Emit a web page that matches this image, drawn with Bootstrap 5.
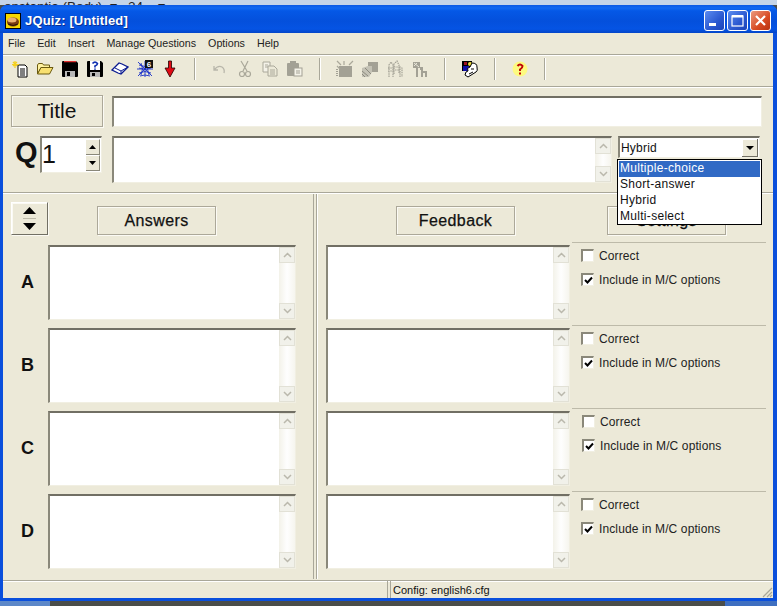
<!DOCTYPE html>
<html lang="en">
<head>
<meta charset="utf-8">
<title>JQuiz</title>
<link href="https://cdn.jsdelivr.net/npm/bootstrap@5.3.0/dist/css/bootstrap.min.css" rel="stylesheet">
<style>
html,body{margin:0;width:777px;height:606px;overflow:hidden;background:#4a4c48;}
body{font-family:"Liberation Sans",Arial,sans-serif;font-size:11.5px;color:#111;line-height:1.2;}
.scene{width:777px;height:606px;}
.deskstrip{height:5px;background:#c4d4e8;overflow:hidden;color:#222;font-size:13.5px;white-space:nowrap;line-height:14px;}
.deskstrip span{display:inline-block;margin-top:-10px;padding-left:4px;}
.xpwin{height:596px;background:#0a4fdc;border-radius:7px 7px 0 0;}
.xptitle{height:28px;flex:none;padding:2px 6px 0 5px;background:linear-gradient(#0a58e4 0,#0f68f2 3px,#0558e6 6px,#0450dc 16px,#0554e4 24px,#0346c8 28px);color:#fff;font-weight:700;font-size:13px;border-radius:7px 7px 0 0;}
.xptitle .apptext{text-shadow:1px 1px 0 #0a2f90;letter-spacing:.15px;margin-top:2px;}
.xptitle .appicon{margin-top:1px;}
.winbtn{width:21px;height:21px;border:1px solid #fff;border-radius:3px;background:linear-gradient(135deg,#5c8cf0,#2a58d0 60%,#1c44b8);}
.winbtn.closebtn{background:linear-gradient(135deg,#ea9a80,#d84a22 60%,#b83210);}
.winbody{margin:0 4px 0 3px;background:#ece9d8;min-height:0;}
.menurow{height:21px;flex:none;padding-left:5px;gap:12px;font-size:10.7px;color:#222;}
.toolrow{height:33px;flex:none;padding:0 0 3px 4px;border-top:1px solid #a9a799;border-bottom:1px solid #a9a799;box-shadow:inset 0 1px 0 #fff,0 1px 0 #fff;}
.toolslot{width:25px;height:24px;flex:none;}
.toolsep{width:25px;height:24px;flex:none;}
.toolsep i{display:block;width:1px;height:22px;background:#a9a799;box-shadow:1px 0 0 #fff;}
.toppanel{height:106px;flex:none;padding:8px 10px 0 8px;position:relative;border-bottom:1px solid #a9a799;box-shadow:0 1px 0 #fff;}
.flatbtn{border:1px solid #aca899;box-shadow:inset 1px 1px 0 #fbfaf4,1px 1px 0 #fbfaf4;background:#ece9d8;font-size:16px;letter-spacing:.4px;-webkit-text-stroke:.25px #111;display:flex;align-items:center;justify-content:center;flex:none;color:#111;}
.titlebtn{width:92px;height:32px;font-size:21px;letter-spacing:0;-webkit-text-stroke:0;}
.sunken{background:#fff;border-top:2px solid #716f64;border-left:2px solid #8a887a;border-right:1px solid #f1efe2;border-bottom:1px solid #f1efe2;}
.titlefield{width:650px;height:31px;margin:1px 0 0 9px;}
.qrow{margin-top:9px;}
.qmark{width:29px;font-size:29px;font-weight:700;line-height:31px;padding-left:4px;margin-top:1px;flex:none;}
.spinbox{width:62px;height:37px;margin-left:0;font-size:25px;line-height:32px;padding-left:0;flex:none;}
.spinarrows{width:14px;margin:1px 1px 0 0;}
.spinarrows b{height:16px;display:flex;align-items:center;justify-content:center;background:#ece9d8;border-bottom:1px solid #8a887a;border-right:1px solid #8a887a;border-top:1px solid #fff;}
.qfield{width:500px;height:47px;margin-left:10px;}
.combo{width:142px;height:22px;margin:0 0 0 6px;font-size:12px;line-height:20px;padding-left:1px;letter-spacing:.2px;align-self:flex-start;}
.combobtn{width:16px;height:18px;background:#ece9d8;border-right:1px solid #716f64;border-bottom:1px solid #716f64;box-shadow:inset 1px 1px 0 #fff;margin-right:1px;margin-top:1px;}
.droplist{position:absolute;left:614px;top:72px;width:145px;height:66px;background:#fff;border:1px solid #000;z-index:5;padding:1px;font-size:12px;letter-spacing:.3px;}
.droplist div{height:16px;line-height:15px;padding-left:1px;}
.droplist .picked{background:#316ac5;color:#fff;}
.scrolltrack{width:16px;flex:none;background:linear-gradient(90deg,#f3f2e9,#fefefe 50%,#f6f5ee);}
.scrollcap{height:16px;background:#f1f1ea;border:1px solid #e2e1d6;display:flex;align-items:center;justify-content:center;}
.mainzone{flex:1 1 auto;min-height:0;}
.leftcol{width:311px;flex:none;padding:9px 0 0 8px;border-right:1px solid #a9a799;}
.rightcol{margin-left:2px;border-left:1px solid #a9a799;box-shadow:inset 1px 0 0 #fff;padding:13px 0 0 9px;flex:1 1 auto;min-width:0;}
.headrow{height:43px;flex:none;}
.headrow.righthead{height:39px;}
.movebtn{width:37px;height:33px;border:1px solid;border-color:#fff #716f64 #716f64 #fff;}
.movebtn b{height:16px;display:flex;align-items:center;justify-content:center;}
.movebtn b+b{border-top:1px solid #bdbaa9;}
.answersbtn{width:119px;height:29px;margin:4px 0 0 49px;}
.feedbackbtn{width:119px;height:29px;margin-left:70px;}
.settingsbtn{width:119px;height:29px;margin-left:92px;}
.letterbox{width:37px;padding-right:4px;font-size:18px;font-weight:700;flex:none;}
.rowstack{gap:8px;}
.ansfield{width:248px;height:75px;}
.fbfield{width:244px;height:75px;}
.optcol{width:194px;height:78px;margin:-3px 0 0 2px;border-top:1px solid #bdbaa9;padding:6px 0 0 9px;font-size:12px;letter-spacing:.12px;color:#222;}
.optcol.nudged{padding-left:10px;}
.optline{height:24px;}
.xpcheck{width:13px;height:13px;flex:none;margin-right:5px;background:#fff;border-top:2px solid #8a887a;border-left:2px solid #8a887a;border-right:1px solid #f1efe2;border-bottom:1px solid #f1efe2;display:flex;align-items:center;justify-content:center;}
.statusrow{height:18px;flex:none;margin-top:1px;border-top:1px solid #a9a799;box-shadow:inset 0 1px 0 #fff;}
.statleft{width:385px;flex:none;border-right:1px solid #a9a799;}
.statright{flex:1 1 auto;padding:3px 0 0 2px;font-size:11px;border-left:1px solid #a9a799;margin-left:2px;}
.bluefoot{height:3px;flex:none;}
.deskfoot{height:5px;background:linear-gradient(90deg,#5d88c8 0,#5d88c8 50px,#4b4d49 50px,#4b4d49 725px,#3f6fc0 725px);}
</style>
</head>
<body>
<div class="scene d-flex flex-column">
 <div class="deskstrip"><span>onstantia (Body)&nbsp;&nbsp;▾&nbsp;&nbsp;&nbsp;24&nbsp;&nbsp;&nbsp;&nbsp;▾</span></div>
 <div class="xpwin d-flex flex-column">
  <div class="xptitle d-flex align-items-center">
   <svg width="16" height="16" viewBox="0 0 16 16" class="appicon me-1 flex-none"><rect width="16" height="16" fill="#f4d800"/><rect x=".5" y=".5" width="15" height="15" fill="none" stroke="#000"/><ellipse cx="8" cy="9" rx="6" ry="4.5" fill="#7a3c10"/><ellipse cx="7" cy="7" rx="4.5" ry="2.5" fill="#e8b070"/><path d="M3 11q5 3 10 0" stroke="#2a1404" fill="none"/></svg>
   <span class="apptext">JQuiz: [Untitled]</span>
   <div class="ms-auto d-flex gap-0">
    <div class="winbtn d-flex align-items-end" style="margin-right:2px"><svg width="19" height="19" viewBox="0 0 19 19"><rect x="4" y="12" width="7" height="3" fill="#fff"/></svg></div>
    <div class="winbtn" style="margin-right:2px"><svg width="19" height="19" viewBox="0 0 19 19"><rect x="4" y="5" width="11" height="10" fill="none" stroke="#fff" stroke-width="1.2"/><rect x="4" y="4" width="11" height="2.5" fill="#fff"/></svg></div>
    <div class="winbtn closebtn"><svg width="19" height="19" viewBox="0 0 19 19"><path d="M5 5l9 9M14 5l-9 9" stroke="#fff" stroke-width="2.2"/></svg></div>
   </div>
  </div>
  <div class="winbody flex-grow-1 d-flex flex-column">
   <div class="menurow d-flex align-items-center"><span>File</span><span>Edit</span><span>Insert</span><span>Manage Questions</span><span>Options</span><span>Help</span></div>
   <div class="toolrow d-flex align-items-center">
    <div class="toolslot d-flex align-items-center justify-content-center"><svg width="18" height="18" viewBox="0 0 18 18"><path d="M7 5h7l2 2v10H7z" fill="#fff" stroke="#000"/><path d="M9 9h5M9 11h5M9 13h5M9 15h5" stroke="#000"/><path d="M4 1v7M1 4.500h7M2 2l4 4M6 2L2 6" stroke="#f4d020" stroke-width="1.2"/></svg></div>
    <div class="toolslot d-flex align-items-center justify-content-center"><svg width="18" height="18" viewBox="0 0 18 18"><path d="M1.500 5l1-1.500h4l1 1.500h6v2.500H5L1.500 14z" fill="#fff2a0" stroke="#6a5a10"/><path d="M1.500 14L5 7.500h12L13.500 14z" fill="#f8e070" stroke="#6a5a10"/></svg></div>
    <div class="toolslot d-flex align-items-center justify-content-center"><svg width="18" height="18" viewBox="0 0 18 18"><path d="M2 1h13l2 2v13a1 1 0 0 1-1 1H2a1 1 0 0 1-1-1V2a1 1 0 0 1 1-1z" fill="#000"/><rect x="3" y="1" width="12" height="1.500" fill="#e03030"/><rect x="3" y="2.500" width="12" height="6" fill="#000"/><rect x="4" y="11" width="10" height="6" fill="#b8b8b8"/><rect x="6" y="12" width="3" height="4" fill="#000"/></svg></div>
    <div class="toolslot d-flex align-items-center justify-content-center"><svg width="18" height="18" viewBox="0 0 18 18"><path d="M2 1h13l2 2v13a1 1 0 0 1-1 1H2a1 1 0 0 1-1-1V2a1 1 0 0 1 1-1z" fill="#000"/><rect x="4" y="1" width="10" height="9" fill="#fff"/><rect x="4" y="12" width="10" height="5" fill="#b8b8b8"/><rect x="6" y="13" width="3" height="3" fill="#000"/><path d="M6.500 3.500Q9 .8 11.500 3.500 11.500 5 9 6V7.500M9 8.500v1.200" fill="none" stroke="#1030b0" stroke-width="1.700"/></svg></div>
    <div class="toolslot d-flex align-items-center justify-content-center"><svg width="18" height="18" viewBox="0 0 18 18"><path d="M1 10l7-7 3 1 6 3-7 7-3-1z" fill="#fff" stroke="#0a1a90" stroke-width="1.300"/><path d="M4 8l6 3M10 14l0-3 7-4" fill="none" stroke="#0a1a90"/></svg></div>
    <div class="toolslot d-flex align-items-center justify-content-center"><svg width="18" height="18" viewBox="0 0 18 18"><path d="M2 2l14 14M16 2L2 16M9 1v16M1 9h16M3 5q6 3 12 0M3 8q6 3 12 0M3 13q6-3 12 0M4 16q5-2 10 0M5 3q3 6 0 12M13 3q-3 6 0 12" stroke="#1a30c8" fill="none" stroke-width=".9"/><rect x="9" y="0" width="8" height="8" fill="#111"/><text x="13" y="7" text-anchor="middle" font-family="Liberation Sans" font-weight="700" font-size="8" fill="#fff">6</text></svg></div>
    <div class="toolslot d-flex align-items-center justify-content-center"><svg width="12" height="18" viewBox="0 0 12 18"><path d="M4.500 1h3v7H11l-5 9-5-9h3.500z" fill="#e00a14" stroke="#200" stroke-width=".8"/></svg></div>
    <div class="toolsep d-flex align-items-center justify-content-center"><i></i></div>
    <div class="toolslot d-flex align-items-center justify-content-center"><svg width="16" height="12" viewBox="0 0 16 12"><path d="M2 3v4h4M2 7q4-5 8-3 3 2 2 6" fill="none" stroke="#b8b6aa" stroke-width="1.300"/></svg></div>
    <div class="toolslot d-flex align-items-center justify-content-center"><svg width="14" height="18" viewBox="0 0 14 18"><path d="M3 1l6 10M10 1L5 11" stroke="#aaa89a" stroke-width="1.200"/><circle cx="4" cy="14" r="2.500" fill="none" stroke="#aaa89a" stroke-width="1.200"/><circle cx="10" cy="14" r="2.500" fill="none" stroke="#aaa89a" stroke-width="1.200"/></svg></div>
    <div class="toolslot d-flex align-items-center justify-content-center"><svg width="16" height="16" viewBox="0 0 16 16"><path d="M1 1h7l0 10H1z" fill="#f4f2e8" stroke="#aaa89a"/><path d="M6 5h6l3 3v7H6z" fill="#ece9d8" stroke="#aaa89a"/><path d="M8 9h5M8 11h5M8 13h5M3 4h3M3 6h3" stroke="#aaa89a"/></svg></div>
    <div class="toolslot d-flex align-items-center justify-content-center"><svg width="17" height="16" viewBox="0 0 17 16"><rect x="1" y="2" width="12" height="13" fill="#a3a195" rx="1"/><rect x="4" y="0" width="6" height="3" fill="#a3a195"/><rect x="8" y="7" width="8" height="8" fill="#f4f2e8" stroke="#a3a195"/><path d="M10 10h4M10 12h4" stroke="#a3a195"/></svg></div>
    <div class="toolsep d-flex align-items-center justify-content-center"><i></i></div>
    <div class="toolslot d-flex align-items-center justify-content-center"><svg width="18" height="18" viewBox="0 0 18 18"><path d="M3 6h13v11H3z" fill="#a3a195"/><path d="M1 1l4 4M17 1l-4 4M8 1v4M1 6l3 3" stroke="#aaa89a" stroke-width="1.200"/><path d="M1 9v7" stroke="#a3a195" stroke-dasharray="1 1" stroke-width="2"/></svg></div>
    <div class="toolslot d-flex align-items-center justify-content-center"><svg width="18" height="18" viewBox="0 0 18 18"><path d="M7 2h10v10H7z" fill="#a3a195"/><path d="M1 8l6-2h4v6l-3 5H1z" fill="#c4c2b5"/><path d="M1 11l6 5M1 14l3 3M4 8l6 6" stroke="#8c8a7e"/></svg></div>
    <div class="toolslot d-flex align-items-center justify-content-center"><svg width="18" height="18" viewBox="0 0 18 18"><path d="M3 17V5l2-3 2 3v12M8 14V4l3-3 2 4v9M14 17V7l2 1v9M2 8h6M2 11h6M8 7h5M9 10h5" fill="none" stroke="#a3a195" stroke-width="1.200" stroke-dasharray="1.500 .8"/></svg></div>
    <div class="toolslot d-flex align-items-center justify-content-center"><svg width="18" height="18" viewBox="0 0 18 18"><path d="M2 2h7v6H7v9H5V8H2z" fill="#a3a195"/><path d="M9 7h3v4h4v6h-2v-4h-2v4h-2V10H9z" fill="#a3a195"/><path d="M3 3l5 4M3 6l3-3" stroke="#e8e6d8"/></svg></div>
    <div class="toolsep d-flex align-items-center justify-content-center"><i></i></div>
    <div class="toolslot d-flex align-items-center justify-content-center"><svg width="18" height="18" viewBox="0 0 18 18"><rect x="1" y="1" width="10" height="10" fill="#000"/><rect x="2" y="6" width="6" height="5" fill="#1010a8"/><rect x="3" y="2" width="3" height="3" fill="#a01020"/><circle cx="9" cy="4" r="2" fill="#f0e040"/><path d="M11 3q5 0 5 4 1 4-1 5l-8 5-3-2 1-3 2-1q-2-3 2-4z" fill="#fff" stroke="#000"/><path d="M8 14l4-2M10 9h3" stroke="#000"/></svg></div>
    <div class="toolsep d-flex align-items-center justify-content-center"><i></i></div>
    <div class="toolslot d-flex align-items-center justify-content-center"><svg width="16" height="16" viewBox="0 0 16 16"><circle cx="8" cy="8" r="7.500" fill="#fdfa80"/><path d="M5.500 5Q8 2 10.500 5 10.500 7 8 8.500V10" fill="none" stroke="#c00808" stroke-width="2"/><rect x="7" y="11.500" width="2" height="2" fill="#c00808"/></svg></div>
    <div class="toolsep d-flex align-items-center justify-content-center"><i></i></div>
   </div>
   <div class="toppanel">
    <div class="d-flex">
     <div class="flatbtn titlebtn">Title</div>
     <div class="sunken titlefield"></div>
    </div>
    <div class="d-flex qrow">
     <div class="qmark">Q</div>
     <div class="sunken spinbox d-flex justify-content-between">
      <span>1</span>
      <div class="spinarrows"><b><svg width="7" height="4" viewBox="0 0 7 4"><path d="M3.500 0L7 4H0z" fill="#000"/></svg></b><b><svg width="7" height="4" viewBox="0 0 7 4"><path d="M0 0h7L3.500 4z" fill="#000"/></svg></b></div>
     </div>
     <div class="sunken qfield d-flex justify-content-end">
      <div class="scrolltrack d-flex flex-column justify-content-between"><div class="scrollcap"><svg width="9" height="6" viewBox="0 0 9 6"><path d="M1 5l3.500-3.500L8 5" fill="none" stroke="#bab8ac" stroke-width="1.500"/></svg></div><div class="scrollcap"><svg width="9" height="6" viewBox="0 0 9 6"><path d="M1 1l3.500 3.500L8 1" fill="none" stroke="#bab8ac" stroke-width="1.500"/></svg></div></div>
     </div>
     <div class="sunken combo d-flex justify-content-between"><span>Hybrid</span><div class="combobtn d-flex align-items-center justify-content-center"><svg width="8" height="4" viewBox="0 0 8 4"><path d="M0 0h8L4 4z" fill="#000"/></svg></div></div>
    </div>
    <div class="droplist"><div class="picked">Multiple-choice</div><div>Short-answer</div><div>Hybrid</div><div>Multi-select</div></div>
   </div>
   <div class="mainzone d-flex">
    <div class="leftcol d-flex flex-column">
     <div class="headrow d-flex">
      <div class="flatbtn movebtn flex-column">
       <b><svg width="13" height="7" viewBox="0 0 13 7"><path d="M6.500 0L13 7H0z" fill="#000"/></svg></b>
       <b><svg width="13" height="7" viewBox="0 0 13 7"><path d="M0 0h13L6.500 7z" fill="#000"/></svg></b>
      </div>
      <div class="flatbtn answersbtn">Answers</div>
     </div>
     <div class="rowstack d-flex flex-column">
      <div class="d-flex align-items-center"><div class="letterbox text-center">A</div><div class="sunken ansfield d-flex justify-content-end"><div class="scrolltrack d-flex flex-column justify-content-between"><div class="scrollcap"><svg width="9" height="6" viewBox="0 0 9 6"><path d="M1 5l3.500-3.500L8 5" fill="none" stroke="#bab8ac" stroke-width="1.500"/></svg></div><div class="scrollcap"><svg width="9" height="6" viewBox="0 0 9 6"><path d="M1 1l3.500 3.500L8 1" fill="none" stroke="#bab8ac" stroke-width="1.500"/></svg></div></div></div></div>
      <div class="d-flex align-items-center"><div class="letterbox text-center">B</div><div class="sunken ansfield d-flex justify-content-end"><div class="scrolltrack d-flex flex-column justify-content-between"><div class="scrollcap"><svg width="9" height="6" viewBox="0 0 9 6"><path d="M1 5l3.500-3.500L8 5" fill="none" stroke="#bab8ac" stroke-width="1.500"/></svg></div><div class="scrollcap"><svg width="9" height="6" viewBox="0 0 9 6"><path d="M1 1l3.500 3.500L8 1" fill="none" stroke="#bab8ac" stroke-width="1.500"/></svg></div></div></div></div>
      <div class="d-flex align-items-center"><div class="letterbox text-center">C</div><div class="sunken ansfield d-flex justify-content-end"><div class="scrolltrack d-flex flex-column justify-content-between"><div class="scrollcap"><svg width="9" height="6" viewBox="0 0 9 6"><path d="M1 5l3.500-3.500L8 5" fill="none" stroke="#bab8ac" stroke-width="1.500"/></svg></div><div class="scrollcap"><svg width="9" height="6" viewBox="0 0 9 6"><path d="M1 1l3.500 3.500L8 1" fill="none" stroke="#bab8ac" stroke-width="1.500"/></svg></div></div></div></div>
      <div class="d-flex align-items-center"><div class="letterbox text-center">D</div><div class="sunken ansfield d-flex justify-content-end"><div class="scrolltrack d-flex flex-column justify-content-between"><div class="scrollcap"><svg width="9" height="6" viewBox="0 0 9 6"><path d="M1 5l3.500-3.500L8 5" fill="none" stroke="#bab8ac" stroke-width="1.500"/></svg></div><div class="scrollcap"><svg width="9" height="6" viewBox="0 0 9 6"><path d="M1 1l3.500 3.500L8 1" fill="none" stroke="#bab8ac" stroke-width="1.500"/></svg></div></div></div></div>
     </div>
    </div>
    <div class="rightcol d-flex flex-column">
     <div class="headrow righthead d-flex align-items-start">
      <div class="flatbtn feedbackbtn">Feedback</div>
      <div class="flatbtn settingsbtn">Settings</div>
     </div>
     <div class="rowstack d-flex flex-column">
      <div class="d-flex"><div class="sunken fbfield d-flex justify-content-end"><div class="scrolltrack d-flex flex-column justify-content-between"><div class="scrollcap"><svg width="9" height="6" viewBox="0 0 9 6"><path d="M1 5l3.500-3.500L8 5" fill="none" stroke="#bab8ac" stroke-width="1.500"/></svg></div><div class="scrollcap"><svg width="9" height="6" viewBox="0 0 9 6"><path d="M1 1l3.500 3.500L8 1" fill="none" stroke="#bab8ac" stroke-width="1.500"/></svg></div></div></div>
       <div class="optcol"><div class="optline d-flex align-items-start"><span class="xpcheck"></span>Correct</div><div class="optline d-flex align-items-start"><span class="xpcheck"><svg width="9" height="9" viewBox="0 0 9 9"><path d="M1 4l2.500 2.500L8 1.500" fill="none" stroke="#000" stroke-width="2"/></svg></span>Include in M/C options</div></div></div>
      <div class="d-flex"><div class="sunken fbfield d-flex justify-content-end"><div class="scrolltrack d-flex flex-column justify-content-between"><div class="scrollcap"><svg width="9" height="6" viewBox="0 0 9 6"><path d="M1 5l3.500-3.500L8 5" fill="none" stroke="#bab8ac" stroke-width="1.500"/></svg></div><div class="scrollcap"><svg width="9" height="6" viewBox="0 0 9 6"><path d="M1 1l3.500 3.500L8 1" fill="none" stroke="#bab8ac" stroke-width="1.500"/></svg></div></div></div>
       <div class="optcol"><div class="optline d-flex align-items-start"><span class="xpcheck"></span>Correct</div><div class="optline d-flex align-items-start"><span class="xpcheck"><svg width="9" height="9" viewBox="0 0 9 9"><path d="M1 4l2.500 2.500L8 1.500" fill="none" stroke="#000" stroke-width="2"/></svg></span>Include in M/C options</div></div></div>
      <div class="d-flex"><div class="sunken fbfield d-flex justify-content-end"><div class="scrolltrack d-flex flex-column justify-content-between"><div class="scrollcap"><svg width="9" height="6" viewBox="0 0 9 6"><path d="M1 5l3.500-3.500L8 5" fill="none" stroke="#bab8ac" stroke-width="1.500"/></svg></div><div class="scrollcap"><svg width="9" height="6" viewBox="0 0 9 6"><path d="M1 1l3.500 3.500L8 1" fill="none" stroke="#bab8ac" stroke-width="1.500"/></svg></div></div></div>
       <div class="optcol nudged"><div class="optline d-flex align-items-start"><span class="xpcheck"></span>Correct</div><div class="optline d-flex align-items-start"><span class="xpcheck"><svg width="9" height="9" viewBox="0 0 9 9"><path d="M1 4l2.500 2.500L8 1.500" fill="none" stroke="#000" stroke-width="2"/></svg></span>Include in M/C options</div></div></div>
      <div class="d-flex"><div class="sunken fbfield d-flex justify-content-end"><div class="scrolltrack d-flex flex-column justify-content-between"><div class="scrollcap"><svg width="9" height="6" viewBox="0 0 9 6"><path d="M1 5l3.500-3.500L8 5" fill="none" stroke="#bab8ac" stroke-width="1.500"/></svg></div><div class="scrollcap"><svg width="9" height="6" viewBox="0 0 9 6"><path d="M1 1l3.500 3.500L8 1" fill="none" stroke="#bab8ac" stroke-width="1.500"/></svg></div></div></div>
       <div class="optcol"><div class="optline d-flex align-items-start"><span class="xpcheck"></span>Correct</div><div class="optline d-flex align-items-start"><span class="xpcheck"><svg width="9" height="9" viewBox="0 0 9 9"><path d="M1 4l2.500 2.500L8 1.500" fill="none" stroke="#000" stroke-width="2"/></svg></span>Include in M/C options</div></div></div>
     </div>
    </div>
   </div>
   <div class="statusrow d-flex">
    <div class="statleft"></div>
    <div class="statright d-flex justify-content-between"><span>Config: english6.cfg</span><svg width="12" height="12" viewBox="0 0 12 12" class="align-self-end"><path d="M11 2L2 11M11 6l-5 5M11 9l-2 2" stroke="#a9a799" stroke-width="1.200"/></svg></div>
   </div>
  </div>
  <div class="bluefoot"></div>
 </div>
 <div class="deskfoot"></div>
</div>
</body>
</html>
